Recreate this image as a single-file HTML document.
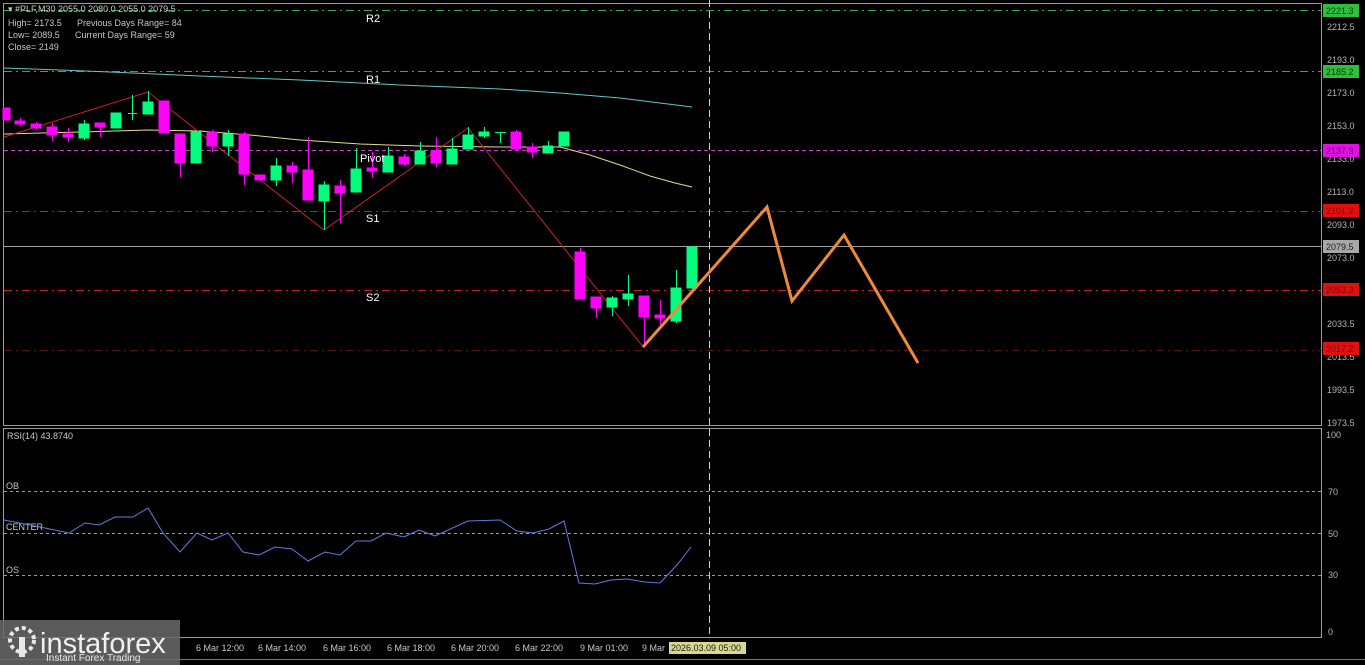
<!DOCTYPE html>
<html><head><meta charset="utf-8"><style>
html,body{margin:0;padding:0;background:#000;width:1365px;height:665px;overflow:hidden}
svg{display:block;font-family:"Liberation Sans",sans-serif}
</style></head><body>
<svg width="1365" height="665" viewBox="0 0 1365 665">
<rect width="1365" height="665" fill="#000"/>
<!-- frames -->
<rect x="3.5" y="3.5" width="1318" height="422" fill="none" stroke="#9a9a9a"/>
<rect x="3.5" y="428.5" width="1318" height="209" fill="none" stroke="#9a9a9a"/>
<!-- level lines -->
<g stroke-width="1" fill="none">
<line x1="4" y1="10.5" x2="1322" y2="10.5" stroke="#3fa84a" stroke-dasharray="8,4,2,4"/>
<line x1="4" y1="71.5" x2="1322" y2="71.5" stroke="#3fa84a" stroke-dasharray="8,4,2,4"/>
<line x1="4" y1="150.5" x2="1322" y2="150.5" stroke="#c040c0" stroke-dasharray="4,3"/>
<line x1="4" y1="211.5" x2="1322" y2="211.5" stroke="#c02020" stroke-dasharray="8,4,2,4"/>
<line x1="4" y1="246.5" x2="1322" y2="246.5" stroke="#a0a0a0"/>
<line x1="4" y1="290.5" x2="1322" y2="290.5" stroke="#c02020" stroke-dasharray="8,4,2,4"/>
<line x1="4" y1="350.5" x2="1322" y2="350.5" stroke="#5a1010" stroke-dasharray="8,4,2,4"/>
<line x1="709.5" y1="0" x2="709.5" y2="638" stroke="#cfcfcf" stroke-dasharray="7,4"/>
<line x1="4" y1="491.5" x2="1322" y2="491.5" stroke="#9a9a9a" stroke-dasharray="3,3"/>
<line x1="4" y1="533.5" x2="1322" y2="533.5" stroke="#9a9a9a" stroke-dasharray="3,3"/>
<line x1="4" y1="575.5" x2="1322" y2="575.5" stroke="#9a9a9a" stroke-dasharray="3,3"/>
</g>
<!-- MAs -->
<polyline fill="none" stroke="#5fc8c8" stroke-width="1" points="4,68 60,70 110,72 200,76 300,80 400,85 500,89 560,93 620,98 660,103 692,107"/>
<polyline fill="none" stroke="#e8d890" stroke-width="1" points="4,134 80,132 148,130 200,131 250,135 300,140 360,144 420,146 500,147 560,147 590,155 620,165 650,176 675,183 692,187"/>
<!-- red zigzag -->
<polyline fill="none" stroke="#d02020" stroke-width="1" points="4,137 148,92 324,230 468,128 644,348"/>
<!-- candles -->
<g stroke-width="1">
<!-- magenta #ff00ff green #00ff7f -->
<g fill="#ff00ff" stroke="#ff00ff">
<rect x="3" y="108" width="7" height="12"/>
<line x1="20.5" y1="118" x2="20.5" y2="126"/><rect x="15" y="121" width="10" height="3"/>
<line x1="36.5" y1="122" x2="36.5" y2="130"/><rect x="31" y="124" width="10" height="4"/>
<line x1="52.5" y1="123" x2="52.5" y2="141"/><rect x="47" y="127" width="10" height="8"/>
<line x1="68.5" y1="128" x2="68.5" y2="142"/><rect x="63" y="134" width="10" height="3"/>
<line x1="100.5" y1="123" x2="100.5" y2="137"/><rect x="95" y="123" width="10" height="4"/>
<rect x="159" y="101" width="10" height="32"/>
<line x1="180.5" y1="134" x2="180.5" y2="177"/><rect x="175" y="134" width="10" height="29"/>
<line x1="212.5" y1="130" x2="212.5" y2="152"/><rect x="207" y="132" width="10" height="14"/>
<line x1="244.5" y1="132" x2="244.5" y2="185"/><rect x="239" y="134" width="10" height="40"/>
<rect x="255" y="175" width="10" height="5"/>
<line x1="292.5" y1="162" x2="292.5" y2="183"/><rect x="287" y="166" width="10" height="6"/>
<line x1="308.5" y1="137" x2="308.5" y2="200"/><rect x="303" y="170" width="10" height="30"/>
<line x1="340.5" y1="180" x2="340.5" y2="223"/><rect x="335" y="186" width="10" height="7"/>
<line x1="372.5" y1="152" x2="372.5" y2="178"/><rect x="367" y="168" width="10" height="3"/>
<line x1="404.5" y1="154" x2="404.5" y2="166"/><rect x="399" y="157" width="10" height="7"/>
<line x1="436.5" y1="137" x2="436.5" y2="167"/><rect x="431" y="151" width="10" height="12"/>
<line x1="516.5" y1="130" x2="516.5" y2="150"/><rect x="511" y="132" width="10" height="17"/>
<line x1="532.5" y1="143" x2="532.5" y2="158"/><rect x="527" y="147" width="10" height="5"/>
<line x1="580.5" y1="248" x2="580.5" y2="300"/><rect x="575" y="252" width="10" height="47"/>
<line x1="596.5" y1="297" x2="596.5" y2="318"/><rect x="591" y="297" width="10" height="11"/>
<line x1="644.5" y1="296" x2="644.5" y2="345"/><rect x="639" y="296" width="10" height="21"/>
<line x1="660.5" y1="300" x2="660.5" y2="326"/><rect x="655" y="315" width="10" height="3"/>
</g>
<g fill="#00ff7f" stroke="#00ff7f">
<line x1="84.5" y1="120" x2="84.5" y2="140"/><rect x="79" y="124" width="10" height="14"/>
<rect x="111" y="113" width="10" height="15"/>
<line x1="132.5" y1="95" x2="132.5" y2="120"/><line x1="128" y1="113.5" x2="137" y2="113.5"/>
<line x1="148.5" y1="91" x2="148.5" y2="114"/><rect x="143" y="102" width="10" height="12"/>
<rect x="191" y="132" width="10" height="31"/>
<line x1="228.5" y1="130" x2="228.5" y2="156"/><rect x="223" y="134" width="10" height="12"/>
<line x1="276.5" y1="158" x2="276.5" y2="186"/><rect x="271" y="166" width="10" height="14"/>
<line x1="324.5" y1="181" x2="324.5" y2="230"/><rect x="319" y="185" width="10" height="16"/>
<line x1="356.5" y1="148" x2="356.5" y2="192"/><rect x="351" y="169" width="10" height="23"/>
<line x1="388.5" y1="147" x2="388.5" y2="172"/><rect x="383" y="156" width="10" height="16"/>
<line x1="420.5" y1="142" x2="420.5" y2="164"/><rect x="415" y="151" width="10" height="13"/>
<line x1="452.5" y1="138" x2="452.5" y2="164"/><rect x="447" y="149" width="10" height="15"/>
<line x1="468.5" y1="127" x2="468.5" y2="149"/><rect x="463" y="135" width="10" height="14"/>
<line x1="484.5" y1="127" x2="484.5" y2="138"/><rect x="479" y="132" width="10" height="4"/>
<line x1="500.5" y1="132" x2="500.5" y2="143"/><line x1="495" y1="132.5" x2="506" y2="132.5"/>
<line x1="548.5" y1="141" x2="548.5" y2="153"/><rect x="543" y="146" width="10" height="7"/>
<rect x="559" y="132" width="10" height="14"/>
<line x1="612.5" y1="296" x2="612.5" y2="316"/><rect x="607" y="298" width="10" height="9"/>
<line x1="628.5" y1="275" x2="628.5" y2="306"/><rect x="623" y="294" width="10" height="5"/>
<line x1="676.5" y1="270" x2="676.5" y2="323"/><rect x="671" y="288" width="10" height="33"/>
<line x1="692.5" y1="246" x2="692.5" y2="290"/><rect x="687" y="247" width="10" height="41"/>
</g>
</g>
<!-- orange forecast -->
<polyline fill="none" stroke="#f08a3a" stroke-width="3" stroke-linejoin="miter" points="643,347 767,207 792,301 844,235 918,363"/>
<!-- level labels -->
<g fill="#ffffff" font-size="11">
<text x="366" y="22">R2</text><text x="366" y="83">R1</text>
<text x="360" y="162">Pivot</text><text x="366" y="222">S1</text><text x="366" y="301">S2</text>
</g>
<!-- info text -->
<g fill="#c8c8c8" font-size="9">
<text x="8" y="12">▾  #PLF,M30  2055.0 2080.0 2055.0 2079.5</text>
<text x="8" y="26">High= 2173.5</text><text x="77" y="26">Previous Days Range= 84</text>
<text x="8" y="38">Low= 2089.5</text><text x="75" y="38">Current Days Range= 59</text>
<text x="8" y="50">Close= 2149</text>
<text x="7" y="439">RSI(14) 43.8740</text>
<text x="6" y="489">OB</text><text x="6" y="530">CENTER</text><text x="6" y="573">OS</text>
</g>
<!-- RSI -->
<polyline fill="none" stroke="#5b7ee0" stroke-width="1" points="4,520 40,527 69,533 85,523 99,525 115,517 133,517 148,508 163,533 180,552 197,533 212,540 228,533 243,552 259,555 275,547 292,549 308,561 325,552 340,555 356,541 371,541 386,533 404,537 419,530 435,536 468,521 500,520 517,531 533,533 549,529 564,521 579,583 595,584 611,580 627,579 645,582 660,583 677,565 691,547"/>
<!-- right axis -->
<g fill="#b4b4b4" font-size="9">
<text x="1327" y="30">2212.5</text><text x="1327" y="63">2193.0</text><text x="1327" y="96">2173.0</text>
<text x="1327" y="129">2153.0</text><text x="1327" y="162">2133.0</text><text x="1327" y="195">2113.0</text>
<text x="1327" y="228">2093.0</text><text x="1327" y="261">2073.0</text><text x="1327" y="327">2033.5</text>
<text x="1327" y="360">2013.5</text><text x="1327" y="393">1993.5</text><text x="1327" y="426">1973.5</text>
<text x="1326" y="438">100</text><text x="1328" y="495">70</text><text x="1328" y="537">50</text>
<text x="1328" y="578">30</text><text x="1328" y="635">0</text>
</g>
<g font-size="9">
<rect x="1323" y="4" width="36" height="13" fill="#2fbf3f"/><text x="1326" y="14" fill="#0a3a0a">2221.3</text>
<rect x="1323" y="65" width="36" height="13" fill="#2fbf3f"/><text x="1326" y="75" fill="#0a3a0a">2185.2</text>
<rect x="1323" y="144" width="36" height="13" fill="#e010e0"/><text x="1326" y="154" fill="#601060">2137.3</text>
<rect x="1323" y="204" width="36" height="13" fill="#e01010"/><text x="1326" y="214" fill="#701010">2101.2</text>
<rect x="1323" y="240" width="36" height="13" fill="#a8a8a8"/><text x="1326" y="250" fill="#202020">2079.5</text>
<rect x="1323" y="283" width="36" height="13" fill="#e01010"/><text x="1326" y="293" fill="#701010">2053.3</text>
<rect x="1323" y="342" width="36" height="13" fill="#e01010"/><text x="1326" y="352" fill="#701010">2017.2</text>
</g>
<!-- time axis -->
<g fill="#c8c8c8" font-size="9">
<text x="196" y="651">6 Mar 12:00</text><text x="258" y="651">6 Mar 14:00</text><text x="323" y="651">6 Mar 16:00</text>
<text x="387" y="651">6 Mar 18:00</text><text x="451" y="651">6 Mar 20:00</text><text x="515" y="651">6 Mar 22:00</text>
<text x="580" y="651">9 Mar 01:00</text><text x="642" y="651">9 Mar</text>
</g>
<rect x="669" y="642" width="77" height="12" fill="#d8d890"/>
<text x="671" y="651" font-size="9" fill="#202020">2026.03.09 05:00</text>
<line x1="0" y1="659.5" x2="1365" y2="659.5" stroke="#777"/>
<!-- logo -->
<rect x="0" y="620" width="180" height="45" fill="#6a6a6a" opacity="0.85"/>
<g fill="#e8e8e8">
<circle cx="22" cy="640" r="12" fill="none" stroke="#e8e8e8" stroke-width="4" stroke-dasharray="4,3"/>
<rect x="19" y="637" width="6" height="20"/>
</g>
<text x="40" y="653" font-size="29" fill="#f0f0f0">instaforex</text>
<text x="46" y="661" font-size="10" fill="#e8e8e8">Instant Forex Trading</text>
</svg>
</body></html>
